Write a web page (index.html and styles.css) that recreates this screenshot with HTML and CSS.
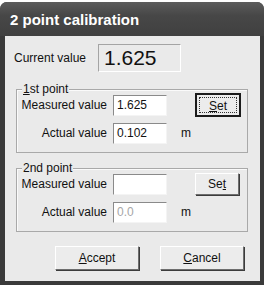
FILE: index.html
```html
<!DOCTYPE html>
<html lang="en">
<head>
    <meta charset="UTF-8">
    <title>2 point calibration</title>
    <link rel="stylesheet" href="styles.css">
</head>
<body>
    <div class="window">
        <div class="titlebar">2 point calibration</div>

        <div class="client">
            <div class="current">
                <span class="current-label">Current value</span>
                <div class="readout">1.625</div>
            </div>

            <div class="group">
                <span class="legend"><u>1</u>st point</span>
                <div class="rows">
                    <span class="label">Measured value</span>
                    <div class="field">1.625</div>
                    <button class="btn set default"><span class="focus"><u>S</u>et</span></button>

                    <span class="label">Actual value</span>
                    <div class="field">0.102</div>
                    <span class="unit">m</span>
                </div>
            </div>

            <div class="group second">
                <span class="legend">2nd point</span>
                <div class="rows">
                    <span class="label">Measured value</span>
                    <div class="field"></div>
                    <button class="btn set">Se<u>t</u></button>

                    <span class="label">Actual value</span>
                    <div class="field disabled">0.0</div>
                    <span class="unit">m</span>
                </div>
            </div>

            <div class="actions">
                <button class="btn action"><u>A</u>ccept</button>
                <button class="btn action"><u>C</u>ancel</button>
            </div>
        </div>
    </div>
</body>
</html>
```

FILE: styles.css
```css
* {
    margin: 0;
    padding: 0;
    box-sizing: border-box;
}

body {
    background: #fff;
    font-family: 'Liberation Sans', Arial, sans-serif;
    font-size: 12px;
    color: #111;
}

.window {
    width: 264px;
    margin-top: 2px;
    background: #3a3a3a;
    border-radius: 7px 7px 0 0;
    padding: 0 4px 4px 5px;
}

.titlebar {
    height: 34px;
    margin: 0 -4px 0 -5px;
    padding: 0 10px;
    border-radius: 7px 7px 0 0;
    background: linear-gradient(#5c5c5c, #474747 40%, #404040);
    color: #fff;
    font-size: 15px;
    font-weight: bold;
    line-height: 36px;
}

.client {
    background: #eaeaea;
    padding: 8px 0 11px 9px;
}

.current {
    display: flex;
    align-items: center;
    height: 28px;
}

.current-label {
    width: 84px;
}

.readout {
    width: 83px;
    height: 28px;
    padding-left: 5px;
    border: 1px solid;
    border-color: #a4a4a4 #fff #fff #a4a4a4;
    font-size: 21px;
    line-height: 26px;
}

.group {
    position: relative;
    width: 232px;
    margin: 17px 0 0 2px;
    padding: 3px 0 7px 0;
    border: 1px solid #a9a9a9;
    box-shadow: inset 1px 1px #fafafa;
}

.group.second {
    margin-top: 15px;
}

.legend {
    position: absolute;
    top: -8px;
    left: 5px;
    padding: 0 1px;
    background: #eaeaea;
    line-height: 14px;
}

.rows {
    display: grid;
    grid-template-columns: 90px 54px 1fr;
    grid-template-rows: 24px 24px;
    column-gap: 6px;
    row-gap: 4px;
    align-items: center;
}

.label {
    text-align: right;
}

.field {
    height: 21px;
    padding-left: 3px;
    background: #fff;
    border: 1px solid;
    border-color: #8a8a8a #f4f4f4 #f4f4f4 #8a8a8a;
    line-height: 19px;
}

.field.disabled {
    color: #a6a6a6;
}

.unit {
    padding-left: 8px;
}

.btn {
    font-family: inherit;
    font-size: 12px;
    color: #111;
    background: #ececec;
    border: 1px solid;
    border-color: #fff #6e6e6e #6e6e6e #fff;
    box-shadow: 1px 1px #3c3c3c;
}

.set {
    justify-self: end;
    width: 44px;
    height: 22px;
    margin-right: 8px;
}

.set.default {
    width: 46px;
    height: 24px;
    margin-right: 6px;
    padding: 2px;
    border: 2px solid #1b1b1b;
    box-shadow: none;
}

.focus {
    display: block;
    height: 100%;
    border: 1px dotted #333;
    line-height: 16px;
}

.actions {
    display: flex;
    justify-content: flex-end;
    gap: 21px;
    margin: 14px 16px 0 0;
}

.action {
    width: 84px;
    height: 24px;
}
```
